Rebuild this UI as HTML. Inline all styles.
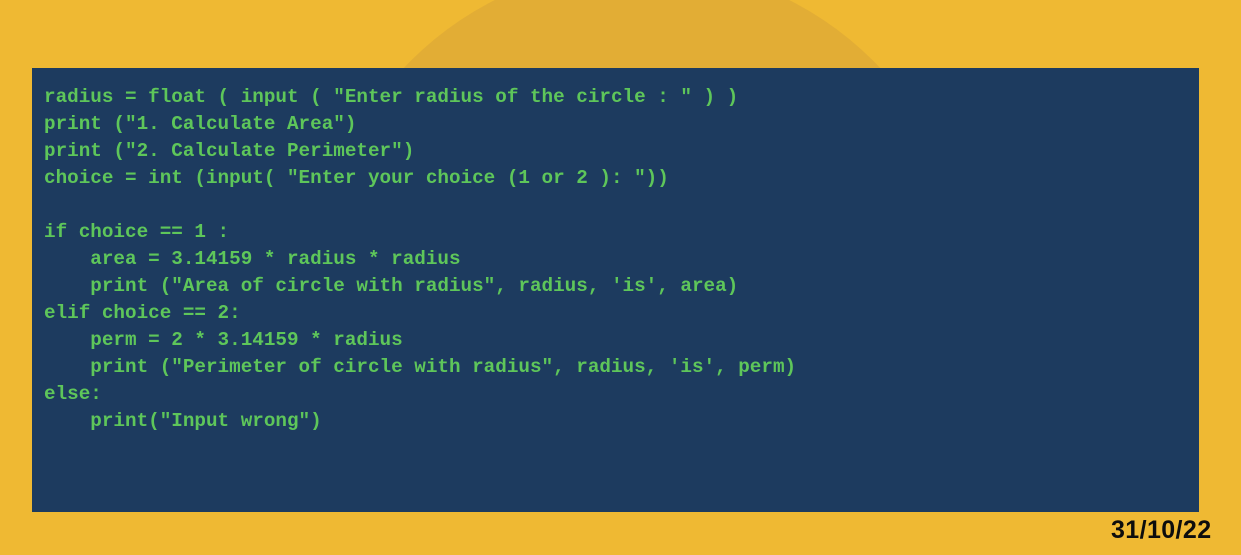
<!DOCTYPE html>
<html><head><style>
html,body{margin:0;padding:0;width:1241px;height:555px;overflow:hidden}
body{background:#efb933;position:relative;font-family:"Liberation Sans",sans-serif}
.clip{position:absolute;left:0;top:0;width:1241px;height:80px;overflow:hidden}
.circ{position:absolute;left:315px;top:-35px;width:654px;height:654px;border-radius:50%;background:#e2ad35}
.box{position:absolute;left:32px;top:68px;width:1167px;height:444px;background:#1d3b5f}
pre{position:absolute;left:44px;top:84px;margin:0;font-family:"Liberation Mono",monospace;font-weight:bold;font-size:19.3px;line-height:27px;color:#5ec65a}
.date{position:absolute;left:1111px;top:516px;font-weight:bold;font-size:25px;color:#0d0d0d;letter-spacing:0.4px}
</style></head><body>
<div class="clip"><div class="circ"></div></div>
<div class="box"></div>
<pre>radius = float ( input ( "Enter radius of the circle : " ) )
print ("1. Calculate Area")
print ("2. Calculate Perimeter")
choice = int (input( "Enter your choice (1 or 2 ): "))

if choice == 1 :
    area = 3.14159 * radius * radius
    print ("Area of circle with radius", radius, 'is', area)
elif choice == 2:
    perm = 2 * 3.14159 * radius
    print ("Perimeter of circle with radius", radius, 'is', perm)
else:
    print("Input wrong")</pre>
<div class="date">31/10/22</div>
</body></html>
